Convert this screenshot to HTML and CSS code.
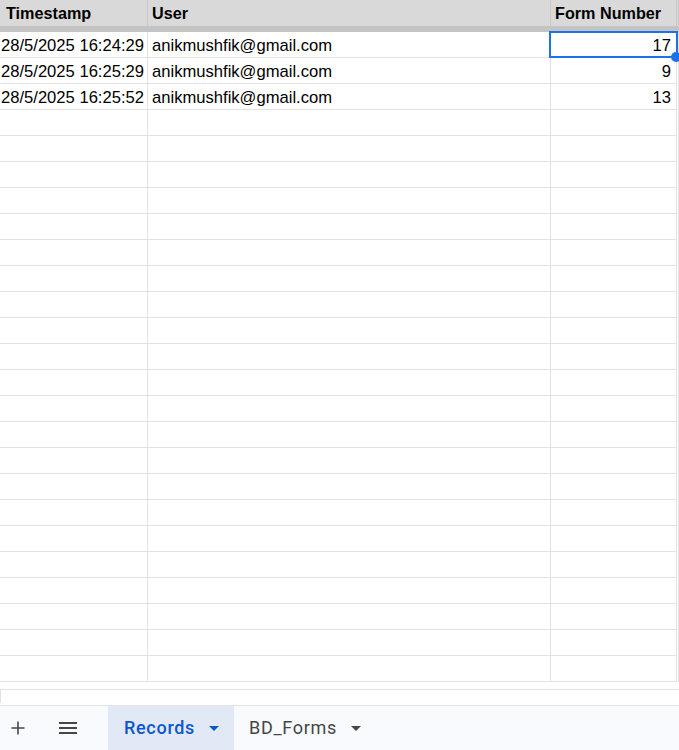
FILE: index.html
```html
<!DOCTYPE html>
<html>
<head>
<meta charset="utf-8">
<link rel="stylesheet" href="styles.css">
</head>
<body>
<div class="app">
  <div class="grid">
    <div class="row head">
      <div class="c c1">Timestamp</div>
      <div class="c c2">User</div>
      <div class="c c3">Form Number</div>
      <div class="c c4"></div>
    </div>
    <div class="freeze"></div>
    <div class="row">
      <div class="c c1 ts">28/5/2025 16:24:29</div>
      <div class="c c2">anikmushfik@gmail.com</div>
      <div class="c c3 num sel">17<span class="selbox"></span><span class="handle"></span></div>
      <div class="c c4"></div>
    </div>
    <div class="row">
      <div class="c c1 ts">28/5/2025 16:25:29</div>
      <div class="c c2">anikmushfik@gmail.com</div>
      <div class="c c3 num">9</div>
      <div class="c c4"></div>
    </div>
    <div class="row">
      <div class="c c1 ts">28/5/2025 16:25:52</div>
      <div class="c c2">anikmushfik@gmail.com</div>
      <div class="c c3 num">13</div>
      <div class="c c4"></div>
    </div>
    <div class="row"><div class="c c1"></div><div class="c c2"></div><div class="c c3"></div><div class="c c4"></div></div>
    <div class="row"><div class="c c1"></div><div class="c c2"></div><div class="c c3"></div><div class="c c4"></div></div>
    <div class="row"><div class="c c1"></div><div class="c c2"></div><div class="c c3"></div><div class="c c4"></div></div>
    <div class="row"><div class="c c1"></div><div class="c c2"></div><div class="c c3"></div><div class="c c4"></div></div>
    <div class="row"><div class="c c1"></div><div class="c c2"></div><div class="c c3"></div><div class="c c4"></div></div>
    <div class="row"><div class="c c1"></div><div class="c c2"></div><div class="c c3"></div><div class="c c4"></div></div>
    <div class="row"><div class="c c1"></div><div class="c c2"></div><div class="c c3"></div><div class="c c4"></div></div>
    <div class="row"><div class="c c1"></div><div class="c c2"></div><div class="c c3"></div><div class="c c4"></div></div>
    <div class="row"><div class="c c1"></div><div class="c c2"></div><div class="c c3"></div><div class="c c4"></div></div>
    <div class="row"><div class="c c1"></div><div class="c c2"></div><div class="c c3"></div><div class="c c4"></div></div>
    <div class="row"><div class="c c1"></div><div class="c c2"></div><div class="c c3"></div><div class="c c4"></div></div>
    <div class="row"><div class="c c1"></div><div class="c c2"></div><div class="c c3"></div><div class="c c4"></div></div>
    <div class="row"><div class="c c1"></div><div class="c c2"></div><div class="c c3"></div><div class="c c4"></div></div>
    <div class="row"><div class="c c1"></div><div class="c c2"></div><div class="c c3"></div><div class="c c4"></div></div>
    <div class="row"><div class="c c1"></div><div class="c c2"></div><div class="c c3"></div><div class="c c4"></div></div>
    <div class="row"><div class="c c1"></div><div class="c c2"></div><div class="c c3"></div><div class="c c4"></div></div>
    <div class="row"><div class="c c1"></div><div class="c c2"></div><div class="c c3"></div><div class="c c4"></div></div>
    <div class="row"><div class="c c1"></div><div class="c c2"></div><div class="c c3"></div><div class="c c4"></div></div>
    <div class="row"><div class="c c1"></div><div class="c c2"></div><div class="c c3"></div><div class="c c4"></div></div>
    <div class="row"><div class="c c1"></div><div class="c c2"></div><div class="c c3"></div><div class="c c4"></div></div>
    <div class="row"><div class="c c1"></div><div class="c c2"></div><div class="c c3"></div><div class="c c4"></div></div>
    <div class="row"><div class="c c1"></div><div class="c c2"></div><div class="c c3"></div><div class="c c4"></div></div>
  </div>
  <div class="hscroll"><div class="track"></div></div>
  <div class="tabs">
    <div class="tbtn plus">
      <svg width="14" height="14" viewBox="0 0 14 14"><path d="M7 0.5V13.5M0.5 7H13.5" stroke="#444746" stroke-width="1.6" fill="none"/></svg>
    </div>
    <div class="tbtn menu">
      <svg width="18" height="12" viewBox="0 0 18 12"><path d="M0 1H18M0 6H18M0 11H18" stroke="#444746" stroke-width="2" fill="none"/></svg>
    </div>
    <div class="tab active">
      <span class="tlabel">Records</span>
      <svg class="caret" width="10" height="5" viewBox="0 0 10 5"><path d="M0 0H10L5 5Z" fill="#0b57d0"/></svg>
    </div>
    <div class="tab">
      <span class="tlabel">BD_Forms</span>
      <svg class="caret" width="10" height="5" viewBox="0 0 10 5"><path d="M0 0H10L5 5Z" fill="#444746"/></svg>
    </div>
  </div>
</div>
</body>
</html>
```

FILE: styles.css
```css
html, body {
  margin: 0;
  padding: 0;
  background: #ffffff;
  overflow: hidden;
}
.app {
  width: 679px;
  height: 750px;
  display: flex;
  flex-direction: column;
  font-family: "Liberation Sans", Arial, sans-serif;
  color: #000;
}
.grid {
  height: 689px;
  overflow: hidden;
  flex: none;
}
.row {
  display: grid;
  grid-template-columns: 148px 403px 126px 1fr;
  height: 26px;
}
.c {
  box-sizing: border-box;
  border-right: 1px solid #e2e2e2;
  border-bottom: 1px solid #e2e2e2;
  font-size: 16.6px;
  line-height: 23px;
  padding: 2px 3px 0 4px;
  white-space: nowrap;
  overflow: hidden;
  position: relative;
}
.c4 {
  border-right: none;
  border-left: 1px solid #e2e2e2;
  margin-left: 1px;
}
.head {
  background: #d9d9d9;
}
.head .c {
  font-weight: bold;
  font-size: 16.2px;
  line-height: 25px;
  padding-top: 1px;
  border-bottom: none;
  border-right-color: #c8c8c8;
  padding-left: 6px;
  overflow: visible;
}
.head .c2 { padding-left: 4px; }
.head .c3 { padding-left: 4px; }
.head .c4 { border-left-color: #c8c8c8; }
.freeze {
  height: 6px;
  background: #c4c4c4;
}
.ts {
  text-align: right;
  direction: rtl;
  unicode-bidi: plaintext;
  padding: 2px 3px 0 0;
}
.num {
  text-align: right;
  padding-right: 5px;
  overflow: visible;
}
.sel {
  z-index: 3;
}
.selbox {
  position: absolute;
  left: -2px;
  top: -1px;
  right: -2px;
  bottom: -1px;
  border: 2px solid #1a73e8;
  pointer-events: none;
}
.handle {
  position: absolute;
  right: -5px;
  bottom: -5px;
  width: 10px;
  height: 10px;
  border-radius: 50%;
  background: #1a73e8;
  z-index: 2;
}
.hscroll {
  height: 15px;
  border-top: 1px solid #e2e2e2;
  flex: none;
  display: flex;
}
.track {
  width: 1px;
  height: 13px;
  background: #e2e2e2;
}
.tabs {
  flex: 1;
  border-top: 1px solid #e3e3e3;
  background: #f8fafd;
  display: flex;
  align-items: stretch;
  font-family: Roboto, "Noto Sans", sans-serif;
}
.tbtn {
  display: flex;
  align-items: center;
  justify-content: center;
}
.plus {
  width: 24px;
  margin-left: 6px;
}
.menu {
  width: 18px;
  margin-left: 29px;
}
.tab {
  display: flex;
  align-items: center;
  gap: 14px;
  padding: 0 16px 0 15px;
  color: #444746;
  font-size: 18px;
  letter-spacing: 0.7px;
}
.tab.active {
  margin-left: 31px;
  padding-left: 16px;
  background: #e1e9f7;
  color: #0b57d0;
  font-weight: 500;
  width: 126px;
  box-sizing: border-box;
}
.tab .tlabel {
  line-height: 20px;
}
.caret {
  flex: none;
}
```
